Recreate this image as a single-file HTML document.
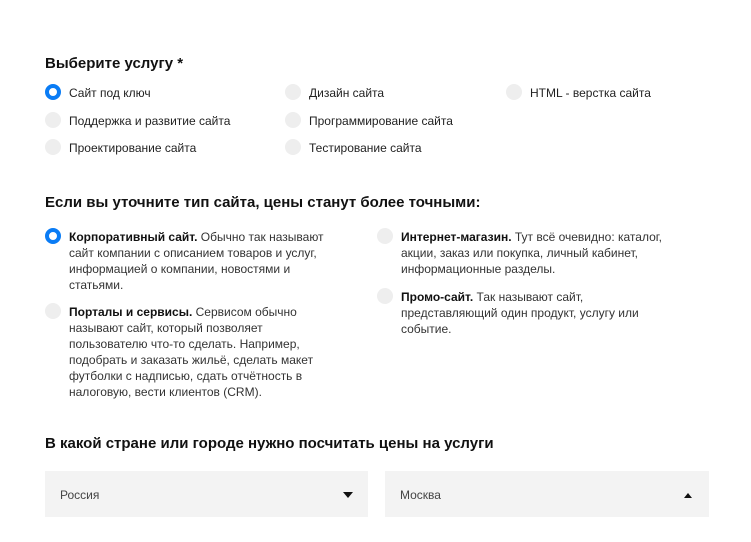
<!DOCTYPE html>
<html><head><meta charset="utf-8"><style>
*{margin:0;padding:0;box-sizing:border-box}
body{width:751px;height:542px;background:#fff;font-family:"Liberation Sans",sans-serif;color:#222;position:relative;overflow:hidden}
h2{position:absolute;font-size:15px;font-weight:bold;color:#111;white-space:nowrap}
.r{position:absolute;width:16px;height:16px;border-radius:50%;background:#eee}
.r.on{background:#fff;border:4px solid #0a7cf5}
.l{position:absolute;font-size:12px;white-space:nowrap;line-height:14px}
.p{position:absolute;font-size:12px;line-height:16px;color:#333}
.p b{color:#111}
.s{position:absolute;top:471px;height:46px;background:#f3f3f3;font-size:12px;color:#444;padding:17px 0 0 15px}
</style></head><body>
<h2 style="left:45px;top:55px">Выберите услугу *</h2>
<div class="r on" style="left:45px;top:84px"></div><div class="l" style="left:69px;top:86px">Сайт под ключ</div>
<div class="r" style="left:45px;top:112px"></div><div class="l" style="left:69px;top:114px">Поддержка и развитие сайта</div>
<div class="r" style="left:45px;top:139px"></div><div class="l" style="left:69px;top:141px">Проектирование сайта</div>
<div class="r" style="left:285px;top:84px"></div><div class="l" style="left:309px;top:86px">Дизайн сайта</div>
<div class="r" style="left:285px;top:112px"></div><div class="l" style="left:309px;top:114px">Программирование сайта</div>
<div class="r" style="left:285px;top:139px"></div><div class="l" style="left:309px;top:141px">Тестирование сайта</div>
<div class="r" style="left:506px;top:84px"></div><div class="l" style="left:530px;top:86px">HTML - верстка сайта</div>

<h2 style="left:45px;top:194px">Если вы уточните тип сайта, цены станут более точными:</h2>
<div class="r on" style="left:45px;top:228px"></div>
<div class="p" style="left:69px;top:229px;width:275px"><b>Корпоративный сайт.</b> Обычно так называют сайт компании с описанием товаров и услуг, информацией о компании, новостями и статьями.</div>
<div class="r" style="left:45px;top:303px"></div>
<div class="p" style="left:69px;top:304px;width:275px"><b>Порталы и сервисы.</b> Сервисом обычно называют сайт, который позволяет пользователю что-то сделать. Например, подобрать и заказать жильё, сделать макет футболки с надписью, сдать отчётность в налоговую, вести клиентов (CRM).</div>
<div class="r" style="left:377px;top:228px"></div>
<div class="p" style="left:401px;top:229px;width:285px"><b>Интернет-магазин.</b> Тут всё очевидно: каталог, акции, заказ или покупка, личный кабинет, информационные разделы.</div>
<div class="r" style="left:377px;top:288px"></div>
<div class="p" style="left:401px;top:289px;width:270px"><b>Промо-сайт.</b> Так называют сайт, представляющий один продукт, услугу или событие.</div>

<h2 style="left:45px;top:435px">В какой стране или городе нужно посчитать цены на услуги</h2>
<div class="s" style="left:45px;width:323px">Россия<svg style="position:absolute;left:298px;top:21px" width="10" height="6"><path d="M0 0H10L5 6Z" fill="#111"/></svg></div>
<div class="s" style="left:385px;width:324px">Москва<svg style="position:absolute;left:299px;top:22px" width="8" height="5"><path d="M0 5H8L4 0Z" fill="#111"/></svg></div>
</body></html>
